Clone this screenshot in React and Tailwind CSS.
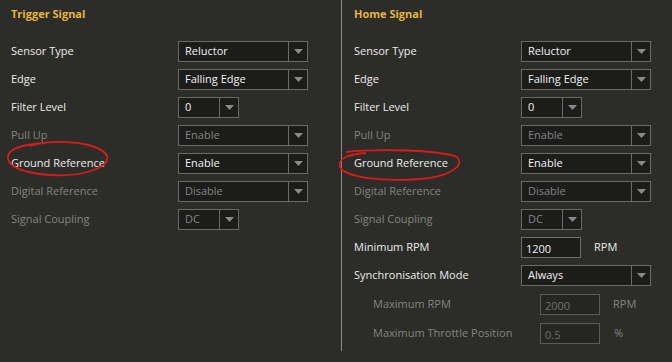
import React from 'react';

const font = { fontFamily: '"Open Sans", "Noto Sans", sans-serif' };

function Arrow() {
    return (
        <svg width="9" height="5" viewBox="0 0 9 5">
            <path d="M0 0 L9 0 L4.5 5 Z" fill="#8a8a8a" />
        </svg>
    );
}

function Select({ value, disabled, narrow }) {
    return (
        <div className={`flex h-[21px] border border-[#6a6a6a] bg-[#1c1c1b] ${narrow ? 'w-[61px]' : 'w-[130px]'}`}>
            <div className={`flex-1 pl-[6px] leading-[18px] ${disabled ? 'text-[#858585]' : 'text-[#f2f2f2]'}`}>{value}</div>
            <div className="flex w-[19px] items-center justify-center border-l border-[#6a6a6a]">
                <Arrow />
            </div>
        </div>
    );
}

function Input({ value, disabled }) {
    return (
        <div className={`h-[21px] w-[60px] border pl-[4px] leading-[21px] ${disabled ? 'border-[#5c5c5a] bg-[#252522] text-[#707070]' : 'border-[#6e6e6e] bg-[#1c1c1b] text-[#f2f2f2]'}`}>
            {value}
        </div>
    );
}

function Row({ label, disabled, children, indent }) {
    return (
        <div className={`flex h-[21px] items-center whitespace-nowrap ${indent ? 'pl-[19px]' : ''}`}>
            <div className={`w-[167px] shrink-0 ${disabled ? 'text-[#858585]' : 'text-[#ececec]'}`}>{label}</div>
            {children}
        </div>
    );
}

function SignalRows() {
    return (
        <>
            <Row label="Sensor Type"><Select value="Reluctor" /></Row>
            <Row label="Edge"><Select value="Falling Edge" /></Row>
            <Row label="Filter Level"><Select value="0" narrow /></Row>
            <Row label="Pull Up" disabled><Select value="Enable" disabled /></Row>
            <Row label="Ground Reference"><Select value="Enable" /></Row>
            <Row label="Digital Reference" disabled><Select value="Disable" disabled /></Row>
            <Row label="Signal Coupling" disabled><Select value="DC" disabled narrow /></Row>
        </>
    );
}

export default function App() {
    return (
        <div className="relative h-[362px] w-[672px] overflow-hidden bg-[#2c2c28] text-[11px]" style={font}>
            <div className="flex">
                <div className="w-[341px] pl-[11px] pt-[5px]">
                    <div className="mb-[18px] h-[18px] font-bold leading-[18px] text-[#e8b53e]">Trigger Signal</div>
                    <div className="flex flex-col gap-[7px]">
                        <SignalRows />
                    </div>
                </div>
                <div className="h-[351px] w-[201px] flex-1 border-l border-[#8a8a8a] pl-[12px] pt-[5px]">
                    <div className="mb-[18px] h-[18px] font-bold leading-[18px] text-[#e8b53e]">Home Signal</div>
                    <div className="flex flex-col gap-[7px]">
                        <SignalRows />
                        <Row label="Minimum RPM">
                            <Input value="1200" />
                            <span className="ml-[13px] text-[#ececec]">RPM</span>
                        </Row>
                        <Row label="Synchronisation Mode"><Select value="Always" /></Row>
                        <div className="mt-[1px] flex flex-col gap-[8px]">
                            <Row label="Maximum RPM" disabled indent>
                                <Input value="2000" disabled />
                                <span className="ml-[13px] text-[#858585]">RPM</span>
                            </Row>
                            <Row label="Maximum Throttle Position" disabled indent>
                                <Input value="0.5" disabled />
                                <span className="ml-[14px] text-[#858585]">%</span>
                            </Row>
                        </div>
                    </div>
                </div>
            </div>
            <svg className="pointer-events-none absolute inset-0" width="672" height="362" viewBox="0 0 672 362">
                <path d="M30 146 C55 138 100 142 107 156 C110 168 82 177 50 175 C20 173 6 165 8 156 C10 148 25 144 46 143" fill="none" stroke="#d81c1c" strokeWidth="1.8" />
                <path d="M346 152 C362 150 425 148 455 156 C466 162 456 176 420 179 C380 182 345 177 340 167 C337 158 350 154 366 153" fill="none" stroke="#d81c1c" strokeWidth="1.8" />
            </svg>
        </div>
    );
}
